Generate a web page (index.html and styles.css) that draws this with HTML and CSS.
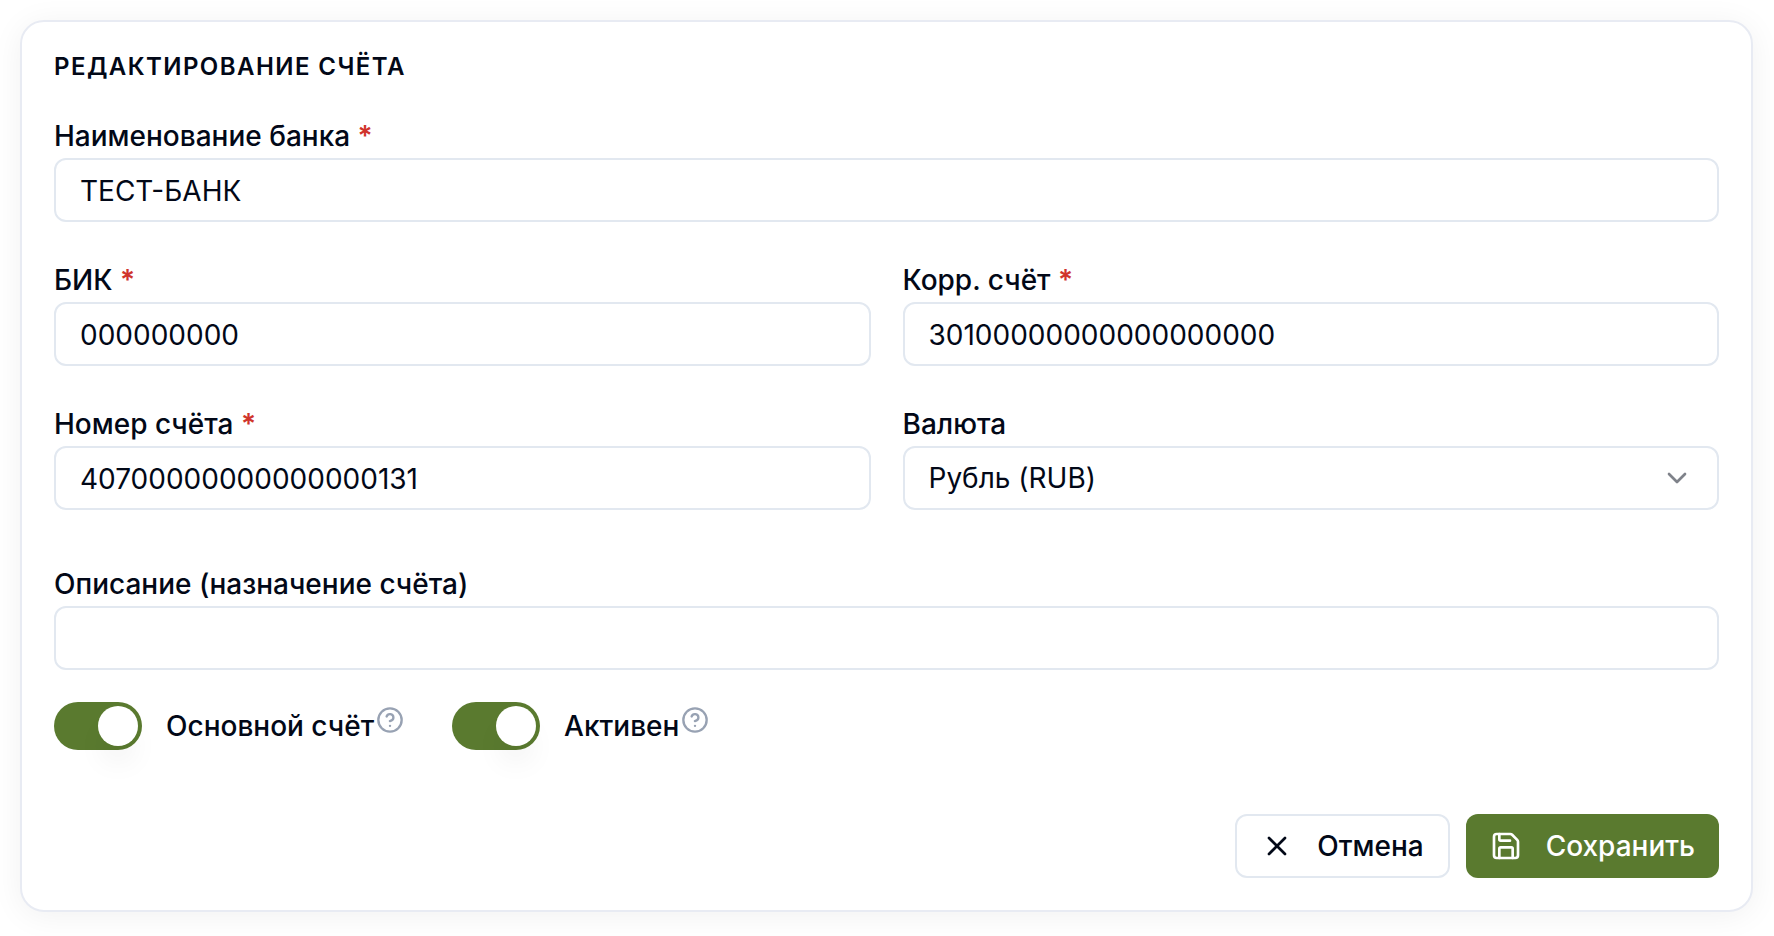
FILE: index.html
```html
<!DOCTYPE html>
<html lang="ru">
<head>
<meta charset="utf-8">
<meta name="viewport" content="width=device-width, initial-scale=1">
<title>Редактирование счёта</title>
<link rel="stylesheet" href="styles.css">
</head>
<body>
<form class="card">
  <h1 class="card-title">Редактирование счёта</h1>

  <div class="field">
    <label class="label" for="bank">Наименование банка <span class="required">*</span></label>
    <input class="control" id="bank" type="text" value="ТЕСТ-БАНК" required>
  </div>

  <div class="fields">
    <div class="field">
      <label class="label" for="bik">БИК <span class="required">*</span></label>
      <input class="control" id="bik" type="text" value="000000000" required>
    </div>
    <div class="field">
      <label class="label" for="corr">Корр. счёт <span class="required">*</span></label>
      <input class="control" id="corr" type="text" value="30100000000000000000" required>
    </div>
    <div class="field">
      <label class="label" for="account">Номер счёта <span class="required">*</span></label>
      <input class="control" id="account" type="text" value="40700000000000000131" required>
    </div>
    <div class="field">
      <label class="label" for="currency">Валюта</label>
      <div class="select-wrap">
        <select class="control select" id="currency">
          <option>Рубль (RUB)</option>
        </select>
        <svg class="icon chevron" viewBox="0 0 24 24" aria-hidden="true"><path d="m6 9 6 6 6-6"/></svg>
      </div>
    </div>
  </div>

  <div class="field field-description">
    <label class="label" for="description">Описание (назначение счёта)</label>
    <input class="control" id="description" type="text">
  </div>

  <div class="toggles">
    <div class="toggle">
      <input class="switch" id="primary" type="checkbox" role="switch" checked>
      <div class="toggle-text">
        <label class="label" for="primary">Основной счёт</label>
        <svg class="icon help" viewBox="0 0 24 24" aria-hidden="true"><circle cx="12" cy="12" r="10"/><path d="M9.09 9a3 3 0 0 1 5.83 1c0 2-3 3-3 3"/><path d="M12 17h.01"/></svg>
      </div>
    </div>
    <div class="toggle">
      <input class="switch" id="active" type="checkbox" role="switch" checked>
      <div class="toggle-text">
        <label class="label" for="active">Активен</label>
        <svg class="icon help" viewBox="0 0 24 24" aria-hidden="true"><circle cx="12" cy="12" r="10"/><path d="M9.09 9a3 3 0 0 1 5.83 1c0 2-3 3-3 3"/><path d="M12 17h.01"/></svg>
      </div>
    </div>
  </div>

  <div class="actions">
    <button class="button button-outline" type="button">
      <svg class="icon" viewBox="0 0 24 24" aria-hidden="true"><path d="M18 6 6 18"/><path d="m6 6 12 12"/></svg>
      Отмена
    </button>
    <button class="button button-primary" type="submit">
      <svg class="icon" viewBox="0 0 24 24" aria-hidden="true"><path d="M15.2 3a2 2 0 0 1 1.4.6l3.8 3.8a2 2 0 0 1 .6 1.4V19a2 2 0 0 1-2 2H5a2 2 0 0 1-2-2V5a2 2 0 0 1 2-2z"/><path d="M17 21v-7a1 1 0 0 0-1-1H8a1 1 0 0 0-1 1v7"/><path d="M7 3v4a1 1 0 0 0 1 1h7"/></svg>
      Сохранить
    </button>
  </div>
</form>
</body>
</html>
```

FILE: styles.css
```css
*,
*::before {
  box-sizing: border-box;
}

:root {
  --ink: #020817;
  --line: #e2e8f0;
  --green: #5a7a2f;
}

body {
  margin: 0;
  padding: 20px 21px 24px 20px;
  background: #fff;
  color: var(--ink);
  font-family: Inter, "Noto Sans", sans-serif;
  font-size: 28px;
  line-height: 40px;
}

.card {
  display: flex;
  flex-direction: column;
  gap: 44px;
  padding: 32px;
  border: 2px solid #e8ebf3;
  border-radius: 24px;
  background: #fff;
  box-shadow: 0 4px 32px rgb(0 0 0 / 6%);
}

.card-title {
  margin: 0 0 -2px;
  font-size: 24px;
  font-weight: 600;
  line-height: 26px;
  letter-spacing: 0.06em;
  text-transform: uppercase;
}

.fields {
  display: grid;
  grid-template-columns: 1fr 1fr;
  gap: 44px 32px;
}

.field {
  display: flex;
  flex-direction: column;
  gap: 8px;
  min-width: 0;
}

.field-description {
  margin-top: 16px;
}

.label {
  font-weight: 500;
  line-height: 28px;
}

.required {
  color: #d0342c;
  font-weight: 600;
}

.control {
  width: 100%;
  height: 64px;
  padding: 2px 24px 0;
  border: 2px solid var(--line);
  border-radius: 12px;
  background: #fff;
  color: inherit;
  font: inherit;
}

.select-wrap {
  position: relative;
}

.select {
  display: block;
  padding-top: 0;
  appearance: none;
}

.icon {
  flex: none;
  width: 32px;
  height: 32px;
  fill: none;
  stroke: currentColor;
  stroke-width: 2;
  stroke-linecap: round;
  stroke-linejoin: round;
}

.chevron {
  position: absolute;
  top: 16px;
  right: 26px;
  opacity: 0.5;
  pointer-events: none;
}

.toggles {
  display: flex;
  flex-wrap: wrap;
  gap: 48px;
  margin-top: -12px;
}

.toggle {
  display: flex;
  align-items: center;
  gap: 24px;
}

.toggle-text {
  display: flex;
  align-items: flex-start;
  gap: 2px;
}

.toggle-text .label {
  line-height: 40px;
}

.switch {
  display: flex;
  justify-content: flex-end;
  width: 88px;
  height: 48px;
  margin: 0;
  padding: 4px;
  border-radius: 24px;
  background: var(--green);
  appearance: none;
}

.switch::before {
  content: "";
  width: 40px;
  height: 40px;
  border-radius: 50%;
  background: #fff;
  box-shadow: 0 20px 30px -6px rgb(0 0 0 / 8%);
}

.switch:not(:checked) {
  justify-content: flex-start;
  background: var(--line);
}

.help {
  width: 28px;
  height: 28px;
  color: #98a2b3;
}

.actions {
  display: flex;
  flex-wrap: wrap;
  justify-content: flex-end;
  gap: 16px;
  margin-top: 20px;
}

.button {
  display: flex;
  align-items: center;
  gap: 24px;
  height: 64px;
  padding: 0 24px;
  border: 0;
  border-radius: 12px;
  font: inherit;
  font-weight: 500;
}

.button-outline {
  border: 2px solid var(--line);
  background: #fff;
  color: var(--ink);
}

.button-primary {
  background: var(--green);
  color: #fff;
}
```
